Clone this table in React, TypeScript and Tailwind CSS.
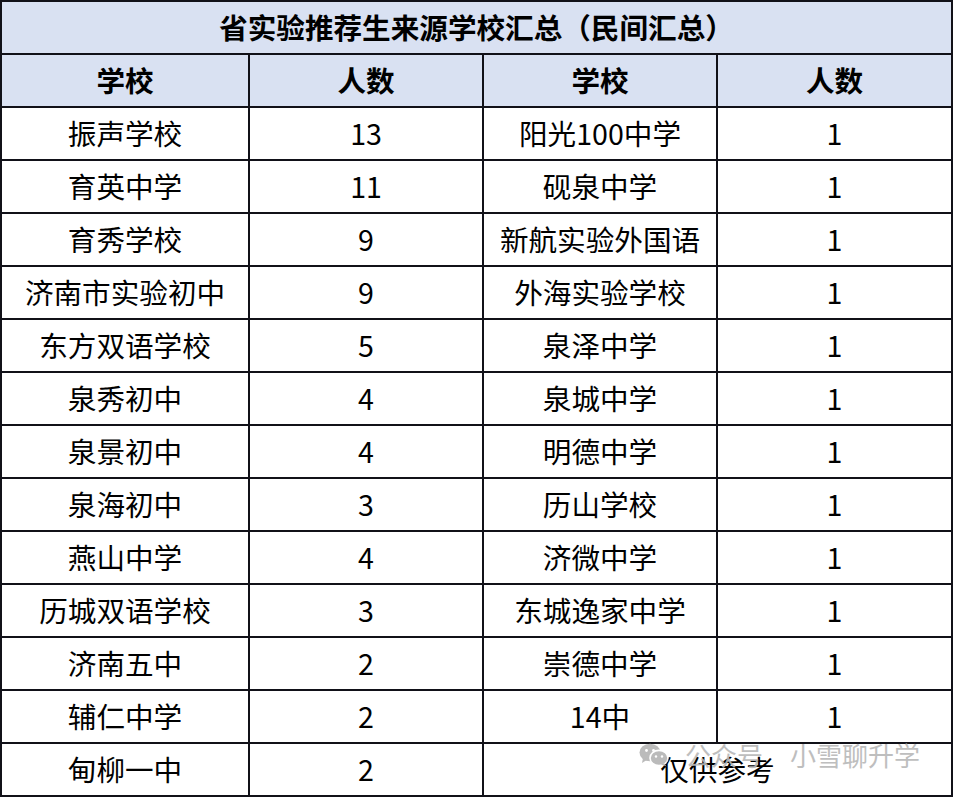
import React from "react";

const left: [string, string][] = [
  ["振声学校", "13"],
  ["育英中学", "11"],
  ["育秀学校", "9"],
  ["济南市实验初中", "9"],
  ["东方双语学校", "5"],
  ["泉秀初中", "4"],
  ["泉景初中", "4"],
  ["泉海初中", "3"],
  ["燕山中学", "4"],
  ["历城双语学校", "3"],
  ["济南五中", "2"],
  ["辅仁中学", "2"],
  ["甸柳一中", "2"],
];

const right: [string, string][] = [
  ["阳光100中学", "1"],
  ["砚泉中学", "1"],
  ["新航实验外国语", "1"],
  ["外海实验学校", "1"],
  ["泉泽中学", "1"],
  ["泉城中学", "1"],
  ["明德中学", "1"],
  ["历山学校", "1"],
  ["济微中学", "1"],
  ["东城逸家中学", "1"],
  ["崇德中学", "1"],
  ["14中", "1"],
];

const cell =
  "flex items-center justify-center border-r-2 border-b-2 border-[#111118] h-[53px] whitespace-nowrap";

function WeChatIcon() {
  return (
    <svg width="30" height="24" viewBox="0 0 30 24">
      <ellipse cx="11" cy="9.5" rx="10.5" ry="8.8" fill="#b4b4b4" />
      <path d="M4 15 L3 20 L8.5 16.5 Z" fill="#b4b4b4" />
      <circle cx="7.5" cy="7.5" r="1.4" fill="#fff" />
      <circle cx="14.5" cy="7.5" r="1.4" fill="#fff" />
      <ellipse cx="20" cy="15" rx="9" ry="7.6" fill="#b4b4b4" stroke="#fff" strokeWidth="1.6" />
      <path d="M25 20 L27.5 23.5 L22 21.5 Z" fill="#b4b4b4" />
      <circle cx="17" cy="13.5" r="1.2" fill="#fff" />
      <circle cx="23" cy="13.5" r="1.2" fill="#fff" />
    </svg>
  );
}

export default function App() {
  return (
    <div
      className="relative w-[953px] h-[797px] bg-white text-black overflow-hidden"
      style={{ fontFamily: '"Noto Sans CJK SC", "Noto Sans", sans-serif' }}
    >
      <div className="grid grid-cols-[248px_234px_234px_235px] border-l-2 border-t-2 border-[#111118] text-[28.6px] leading-none">
        <div className={`${cell} col-span-4 h-[52px] bg-[#d9e1f2] font-bold`}>
          省实验推荐生来源学校汇总（民间汇总）
        </div>
        <div className={`${cell} bg-[#d9e1f2] font-bold`}>学校</div>
        <div className={`${cell} bg-[#d9e1f2] font-bold`}>人数</div>
        <div className={`${cell} bg-[#d9e1f2] font-bold`}>学校</div>
        <div className={`${cell} bg-[#d9e1f2] font-bold`}>人数</div>
        {left.map(([name, n], i) => (
          <React.Fragment key={name}>
            <div className={cell}>{name}</div>
            <div className={cell}>{n}</div>
            {i < right.length ? (
              <>
                <div className={cell}>{right[i][0]}</div>
                <div className={cell}>{right[i][1]}</div>
              </>
            ) : (
              <div className={`${cell} col-span-2`}>仅供参考</div>
            )}
          </React.Fragment>
        ))}
      </div>
      <div className="absolute left-[639px] top-[742px] flex items-center text-[26px] leading-none text-[#b8b8b8] opacity-90">
        <WeChatIcon />
        <span className="ml-[16px]">公众号</span>
        <span className="ml-[27px]">小雪聊升学</span>
      </div>
    </div>
  );
}
